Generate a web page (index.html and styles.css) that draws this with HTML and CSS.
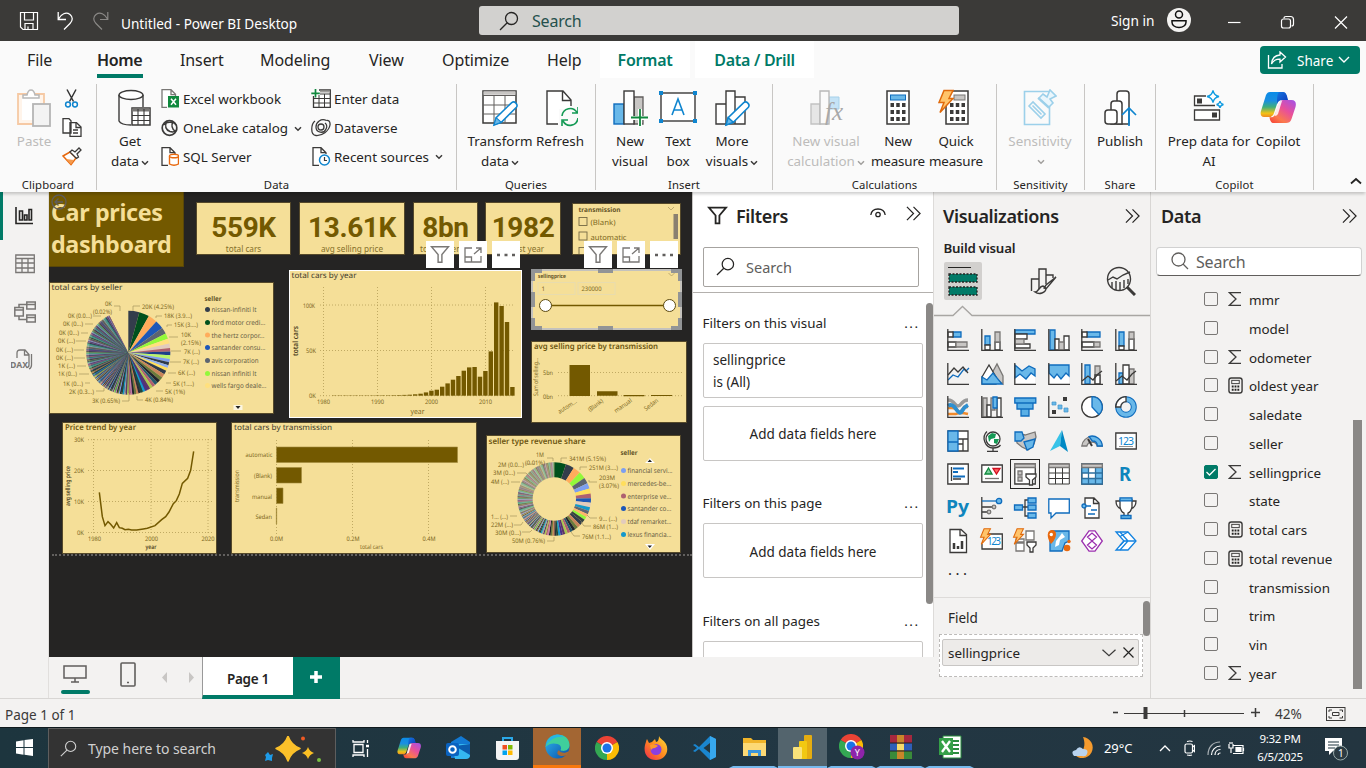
FILE: index.html
```html
<!DOCTYPE html>
<html lang="en">
<head>
<meta charset="utf-8">
<title>Untitled - Power BI Desktop</title>
<link rel="stylesheet" href="styles.css">
</head>
<body>
<svg class="defs" width="0" height="0">
  <defs>
    <linearGradient id="cpA" x1="0" y1="0" x2="0" y2="1"><stop offset="0" stop-color="#0a8be8"/><stop offset=".35" stop-color="#1a8fe0"/><stop offset=".6" stop-color="#3fae7c"/><stop offset=".85" stop-color="#f2c316"/><stop offset="1" stop-color="#f08a20"/></linearGradient>
    <linearGradient id="cpB" x1="1" y1="0" x2="0.2" y2="1"><stop offset="0" stop-color="#a052ea"/><stop offset=".45" stop-color="#e84f9b"/><stop offset=".8" stop-color="#fb7a4d"/><stop offset="1" stop-color="#f8503c"/></linearGradient>
    <linearGradient id="cpC" x1="0" y1="0" x2="1" y2="1"><stop offset="0" stop-color="#1476e0"/><stop offset="1" stop-color="#0e35b8"/></linearGradient>
    <linearGradient id="edg" x1="0" y1="0" x2="1" y2="1"><stop offset="0" stop-color="#2db6ee"/><stop offset="1" stop-color="#0b4fa8"/></linearGradient>
    <linearGradient id="ffx" x1="1" y1="0" x2="0" y2="1"><stop offset="0" stop-color="#ffe03a"/><stop offset=".5" stop-color="#ff8a1f"/><stop offset="1" stop-color="#f0264f"/></linearGradient>
  </defs>
  <symbol id="sigma" viewBox="0 0 14 16"><path d="M13 1.700H1.500L8 8l-6.500 6.300H13" fill="none" stroke="#3b3a39" stroke-width="1.300"/></symbol>
  <symbol id="calc" viewBox="0 0 16 18"><rect x="1" y="1" width="14" height="16" rx="2.500" fill="none" stroke="#3b3a39" stroke-width="1.500"/><rect x="4" y="3.500" width="8" height="3.500" fill="none" stroke="#3b3a39"/><path d="M4 10h2M7 10h2M10 10h2M4 13.500h2M7 13.500h2M10 13.500h2" stroke="#252423" stroke-width="2"/></symbol>
  <symbol id="dbl" viewBox="0 0 16 16"><path d="M1 1l7 7-7 7M8 1l7 7-7 7" fill="none" stroke="#252423" stroke-width="1.300"/></symbol>
  <symbol id="mag" viewBox="0 0 20 20"><circle cx="12.500" cy="7.500" r="6" fill="none" stroke="currentColor" stroke-width="1.300"/><path d="M8.200 11.800L1 19" stroke="currentColor" stroke-width="1.300"/></symbol>
  <symbol id="funnel" viewBox="0 0 20 20"><path d="M1 1.800h18L12 10v8.200H8V10z" fill="none" stroke="currentColor" stroke-width="1.500"/></symbol>
  <symbol id="chev" viewBox="0 0 8 6"><path d="M1 1.200l3 3 3-3" fill="none" stroke="currentColor" stroke-width="1.500"/></symbol>
  <symbol id="copilot" viewBox="0 0 36 33"><path d="M10 1h12c3 0 4 2 4.500 4l1 4h-6c-2 0-3.500 1-4.500 4l-3 9c-1 3-2.500 4-5 4H4c-3 0-4-3-3-6L6 4c1-2 2-3 4-3z" fill="url(#cpA)"/><path d="M19 1h4c3 0 4 3 5 8h-6c-3 0-4 2-5 4 0-5 0-10 2-12z" fill="url(#cpC)"/><path d="M26 32H14c-3 0-4-2-4.500-6 4 1 5-1 6-4l3-9c1-3 3-4 5-4h8c4 0 5 3 4 7l-4 12c-1 3-3 4-5.500 4z" fill="url(#cpB)"/><path d="M18.500 11q1.500-1.500 3.500-1l-4 13q-1 2-3.500 2z" fill="#fff" opacity=".85"/></symbol>
  <symbol id="chrome" viewBox="0 0 24 24"><path d="M12 12L1.600 6A12 12 0 0 1 22.400 6z" fill="#ea4335"/><path d="M12 12L22.400 6A12 12 0 0 1 12 24z" fill="#fbbc04"/><path d="M12 12v12A12 12 0 0 1 1.600 6z" fill="#34a853"/><circle cx="12" cy="12" r="6" fill="#fff"/><circle cx="12" cy="12" r="4.500" fill="#1a73e8"/></symbol>
  <symbol id="pencil" viewBox="0 0 26 26"><path d="M2 24l2-7L19 2.500q2-1.500 4 .5t.5 4L9 21.500z" fill="#fff" stroke="#0f85cf" stroke-width="1.500"/><path d="M2 24l2-7 5 4.500z" fill="#69b8e9" stroke="#0f85cf"/></symbol>
  <symbol id="bolt" viewBox="0 0 16 24"><path d="M6 1h9l-4 8h4L2 23l4-10H1z" fill="#ffc46b" stroke="#e06a0c" stroke-width="1.500"/></symbol>
</svg>

<div class="app">
  <header class="titlebar">
    <div class="quick">
      <svg width="20" height="20" viewBox="0 0 20 20" fill="none" stroke="#fff" stroke-width="1.200"><path d="M1.500 1.500h17v17H4l-2.500-2.500zM5.500 1.500V9h9V1.500M6 18.500v-6h8v6M9 18.500v-3"/></svg>
      <svg width="17" height="19" viewBox="0 0 17 19" fill="none" stroke="#fff" stroke-width="1.300"><path d="M1.200 1v7.500H9M1.500 8C4 3 9 .5 13 3.500c3 2.500 3 6 0 9L7 18.500"/></svg>
      <svg class="redo" width="17" height="19" viewBox="0 0 17 19" fill="none" stroke="#8a8886" stroke-width="1.200"><path d="M15.800 1v7.500H8M15.500 8C13 3 8 .5 4 3.500c-3 2.500-3 6 0 9l6 6"/></svg>
      <span class="apptitle">Untitled - Power BI Desktop</span>
    </div>
    <div class="topsearch"><svg width="20" height="20"><use href="#mag"/></svg><span>Search</span></div>
    <div class="account">
      <span>Sign in</span>
      <svg class="avatar" width="24" height="24" viewBox="0 0 24 24"><circle cx="12" cy="12" r="12" fill="#f3f2f1"/><circle cx="12" cy="6.500" r="3.500" fill="none" stroke="#111" stroke-width="1.500"/><path d="M5 12.700h14v1.500c0 3-3 5.300-7 5.300s-7-2.300-7-5.300z" fill="none" stroke="#111" stroke-width="1.500"/></svg>
      <svg class="win" width="125" height="14" viewBox="0 0 125 14" fill="none" stroke="#fff" stroke-width="1.200"><path d="M0 7.500h12.500"/><rect x="53.500" y="4" width="9" height="9" rx="2"/><path d="M56 3.500q0-2 2-2h4.500q3 0 3 3V9q0 2-2 2"/><path d="M107 1.500L119 13.500M119 1.500L107 13.500"/></svg>
    </div>
  </header>

  <nav class="tabs">
    <span class="tab file">File</span><span class="tab home">Home</span><span class="tab ins">Insert</span><span class="tab mod">Modeling</span><span class="tab view">View</span><span class="tab opt">Optimize</span><span class="tab help">Help</span><span class="tab ctx fmt">Format</span><span class="tab ctx drill">Data / Drill</span>
    <button class="share"><svg width="20" height="18" viewBox="0 0 20 18" fill="none" stroke="#fff" stroke-width="1.300"><path d="M1.500 4v13h13.500v-4"/><path d="M13 1l5.500 5-5.500 5V8.200C9 8 6.500 9.500 4.500 13 5 7.500 8 4.200 13 4z"/></svg><span>Share</span><svg width="12" height="8" viewBox="0 0 12 8" fill="none" stroke="#fff" stroke-width="1.400"><path d="M1 1l5 5 5-5"/></svg></button>
  </nav>

  <section class="ribbon">
    <div class="group g-clip">
      <div class="items">
        <div class="big paste off"><svg width="36" height="38" viewBox="0 0 36 38"><path d="M2 5h26v30H2z" fill="#fff4ea" stroke="#f6c9a4" stroke-width="1.800"/><path d="M6 9h18v22H6z" fill="#fff"/><path d="M7 9V6h4q1-5 4-5t4 5h4v3z" fill="#fff" stroke="#b8b8b8" stroke-width="1.500"/><rect x="17" y="15" width="17" height="22" fill="#f3f3f3" stroke="#b5b5b5" stroke-width="1.800"/></svg><span>Paste</span></div>
        <div class="minis">
          <svg width="19" height="19" viewBox="0 0 19 19" fill="none"><path d="M5 0.500l6.500 12M14 .5L7.500 12.500" stroke="#333" stroke-width="1.500"/><circle cx="6" cy="15.500" r="2.400" stroke="#0f85cf" stroke-width="1.500"/><circle cx="13" cy="15.500" r="2.400" stroke="#0f85cf" stroke-width="1.500"/></svg>
          <svg width="20" height="19" viewBox="0 0 20 19" fill="#fff" stroke="#3b3a39" stroke-width="1.300"><path d="M1 .7h6l2 2V15H1zM8 4.700h6.500L19 9v9.300H8z"/><path d="M14 5v4.500h5M11 12h5M11 15h5" fill="none"/></svg>
          <svg width="20" height="19" viewBox="0 0 20 19"><path d="M1 9l7-4 6 6-5 6.500z" fill="#fff" stroke="#e8690f" stroke-width="1.500"/><path d="M4 12l8 1-3 4.500z" fill="#f59a4d"/><path d="M8 5l2-2 3 2 4-4 2 2-4 4 1.500 3-2 1.500z" fill="#fff" stroke="#3b3a39" stroke-width="1.300"/></svg>
        </div>
      </div>
      <div class="glabel">Clipboard</div>
    </div>

    <div class="group g-data">
      <div class="items">
        <div class="big getdata"><svg width="36" height="38" viewBox="0 0 36 38"><path d="M4 6v26q2 4 12 4M28 6v12" fill="none" stroke="#3b3a39" stroke-width="1.400"/><ellipse cx="16" cy="6" rx="12" ry="4.500" fill="#fff" stroke="#3b3a39" stroke-width="1.400"/><rect x="17" y="19" width="18" height="17" fill="#fff" stroke="#3b3a39" stroke-width="1.500"/><path d="M17 21h18" stroke="#797775" stroke-width="3"/><path d="M17 26.500h18M17 31.500h18M23 20v16M29 20v16" stroke="#3b3a39" stroke-width="1.100"/></svg><span>Get</span><span>data <svg class="cv"><use href="#chev"/></svg></span></div>
        <div class="rows c1">
          <div><svg width="18" height="19" viewBox="0 0 18 19"><path d="M6 18.300H1V.7h9l4.500 4.500V7M10 .7v5h4.500" fill="#fff" stroke="#797775" stroke-width="1.300"/><rect x="7" y="7" width="11" height="11.500" fill="#10893e"/><path d="M10 9.700l5 6M15 9.700l-5 6" stroke="#fff" stroke-width="1.500"/></svg><span>Excel workbook</span></div>
          <div><svg width="18" height="18" viewBox="0 0 18 18" fill="none" stroke="#3b3a39" stroke-width="1.700"><circle cx="8.500" cy="9" r="7.300"/><path d="M6 2.500C3 7 5 11 9 12.500c3 1 6 0 7-2M3 6c1-3 10-4 12 0M12 3c-2 3-1 7 2 9" stroke-width="1.500"/></svg><span>OneLake catalog</span><svg class="cv far"><use href="#chev"/></svg></div>
          <div><svg width="18" height="19" viewBox="0 0 18 19"><path d="M7 18.300H1V.7h8l5 5V7M9 .7v5h5" fill="#fff" stroke="#3b3a39" stroke-width="1.300"/><path d="M8.500 9v8q4.500 2.500 9 0V9" fill="#fff" stroke="#e8690f" stroke-width="1.400"/><ellipse cx="13" cy="9" rx="4.500" ry="1.800" fill="#fff" stroke="#e8690f" stroke-width="1.400"/></svg><span>SQL Server</span></div>
        </div>
        <div class="rows c2">
          <div><svg width="20" height="19" viewBox="0 0 20 19"><path d="M2.500 7v11.300H19.300V1H8" fill="#fff" stroke="#3b3a39" stroke-width="1.300"/><path d="M9 2.500h10" stroke="#a19f9d" stroke-width="2"/><path d="M3 9.500h16M3 14h16M8 6v12M13.500 5v13M9 5h10" stroke="#3b3a39"/><path d="M4.500 0v8.500M.3 4.300h8.500" stroke="#10893e" stroke-width="1.700"/></svg><span>Enter data</span></div>
          <div><svg width="20" height="18" viewBox="0 0 20 18" fill="none" stroke="#3b3a39" stroke-width="1.300"><circle cx="10" cy="8" r="3"/><path d="M15.500 1.500C10-1 5 3 5 8c0 6 8 7 10 2 2-4-1-6-1-6M4 2C0 5-1 16 5 16.500 11 17 18 12 19 6c.5-4-2-5-3.500-4.500"/></svg><span>Dataverse</span></div>
          <div><svg width="18" height="19" viewBox="0 0 18 19"><path d="M7 18.300H1V.7h8l5 5V7M9 .7v5h5" fill="#fff" stroke="#3b3a39" stroke-width="1.300"/><circle cx="12.500" cy="13" r="5" fill="#fff" stroke="#0f85cf" stroke-width="1.500"/><path d="M12.500 10v3.500H15" fill="none" stroke="#3b3a39" stroke-width="1.200"/></svg><span>Recent sources</span><svg class="cv near"><use href="#chev"/></svg></div>
        </div>
      </div>
      <div class="glabel">Data</div>
    </div>

    <div class="group g-query">
      <div class="items">
        <div class="big w64"><svg width="38" height="38" viewBox="0 0 38 38"><rect x="2" y="2" width="33" height="32" fill="#fff" stroke="#3b3a39" stroke-width="1.500"/><path d="M2.500 4h32" stroke="#c8c6c4" stroke-width="3.500"/><path d="M2 6.500h33M2 16h33M2 25h33M13 6.500V34M24 6.500V34" stroke="#605e5c" stroke-width="1"/><use href="#pencil" x="11" y="11" width="27" height="27"/></svg><span>Transform</span><span>data <svg class="cv"><use href="#chev"/></svg></span></div>
        <div class="big w56"><svg width="36" height="38" viewBox="0 0 36 38"><path d="M5 2h16l8 9v9H17v15H5z" fill="#fff"/><path d="M16 35H5V2h16l8 9v6M20.500 2v9.500H29" fill="none" stroke="#3b3a39" stroke-width="1.400"/><path d="M20 27c1-8 11-10 15-3.500M36 29c-1 8-11 10-15 3M36 18v6h-6M20 37v-6h6" fill="none" stroke="#159a55" stroke-width="1.600"/></svg><span>Refresh</span></div>
      </div>
      <div class="glabel">Queries</div>
    </div>

    <div class="group g-ins">
      <div class="items">
        <div class="big w48"><svg width="36" height="38" viewBox="0 0 36 38"><rect x="2" y="15" width="10" height="20" fill="#69b8e9" stroke="#0f6cbd" stroke-width="1.400"/><path d="M22 8h9v27h-9z" fill="#c8c6c4" stroke="#605e5c" stroke-width="1.300"/><rect x="12" y="2" width="10" height="33" fill="#fff" stroke="#3b3a39" stroke-width="1.400"/><path d="M28 20v18M19 29h18" stroke="#fff" stroke-width="4"/><path d="M28 20v17M19 28.500h18" stroke="#10893e" stroke-width="1.800"/></svg><span>New</span><span>visual</span></div>
        <div class="big w48"><svg width="38" height="38" viewBox="0 0 38 38"><rect x="2" y="4" width="34" height="28" fill="#fff" stroke="#3b3a39" stroke-width="1.400"/><path d="M0 2h4v4H0zM34 2h4v4h-4zM0 30h4v4H0zM34 30h4v4h-4z" fill="#0f85cf"/><path d="M13 26l6-16 6 16M15 21h8" fill="none" stroke="#0f85cf" stroke-width="1.600"/></svg><span>Text</span><span>box</span></div>
        <div class="big w60"><svg width="38" height="38" viewBox="0 0 38 38" stroke="#3b3a39" stroke-width="1.400" fill="#fff"><path d="M3 15h10v20H3zM22 8h10v27H22zM13 2h9v33h-9z"/><use href="#pencil" x="11" y="11" width="27" height="27"/></svg><span>More</span><span>visuals <svg class="cv"><use href="#chev"/></svg></span></div>
      </div>
      <div class="glabel">Insert</div>
    </div>

    <div class="group g-calc">
      <div class="items">
        <div class="big w86 off"><svg width="36" height="38" viewBox="0 0 36 38"><path d="M3 15h9v20H3z" fill="#e6e6e6" stroke="#c2c2c2" stroke-width="1.400"/><path d="M21 8h10v12H21z" fill="#c5e3f6" stroke="#a5d1ea"/><path d="M12 2h9v33h-9z" fill="#fafafa" stroke="#b8b8b8" stroke-width="1.400"/><text x="17" y="31" font-family="Liberation Serif" font-style="italic" font-size="25" fill="#a8a8a8">fx</text></svg><span>New visual</span><span>calculation <svg class="cv"><use href="#chev"/></svg></span></div>
        <div class="big w58"><svg width="26" height="38" viewBox="0 0 26 38"><rect x="2" y="2" width="22" height="33" fill="#fff" stroke="#3b3a39" stroke-width="1.500"/><rect x="5.500" y="6" width="15" height="5" fill="#69b8e9" stroke="#0f6cbd"/><path d="M5.500 16h15M5.500 23h15M5.500 30h15" stroke="#3b3a39" stroke-width="4" stroke-dasharray="3.500 2.250"/></svg><span>New</span><span>measure</span></div>
        <div class="big w58"><svg width="36" height="38" viewBox="0 0 36 38"><rect x="8" y="2" width="22" height="33" fill="#fff" stroke="#3b3a39" stroke-width="1.500"/><rect x="16" y="6" width="11" height="5" fill="#c8c6c4" stroke="#797775"/><path d="M12 16h15M12 23h15M12 30h15" stroke="#3b3a39" stroke-width="4" stroke-dasharray="3.500 2.250"/><use href="#bolt" x="0" y="0" width="16" height="25"/></svg><span>Quick</span><span>measure</span></div>
      </div>
      <div class="glabel">Calculations</div>
    </div>

    <div class="group g-sens">
      <div class="items">
        <div class="big w86 off"><svg width="34" height="38" viewBox="0 0 34 38" fill="#fafafa" stroke="#9cd0ea" stroke-width="1.600"><path d="M1.500 2.500h25v33h-25z"/><path d="M6 17l4-4 12 12-4 4zM9.500 16.500l9 9"/><path d="M16 9l4-4 4 3 3-7 6 6-6 3 3 4-4 4z" fill="#eaf6fc"/><path d="M15 9l11 10" stroke-width="2"/></svg><span>Sensitivity</span><span class="onlycv"><svg class="cv"><use href="#chev"/></svg></span></div>
      </div>
      <div class="glabel">Sensitivity</div>
    </div>

    <div class="group g-share">
      <div class="items">
        <div class="big w60"><svg width="34" height="38" viewBox="0 0 34 38" fill="#fff" stroke="#3b3a39" stroke-width="1.500"><path d="M14 35V5q0-3 3-3h6q3 0 3 3v30z"/><path d="M8 35V15q0-3 3-3h5q3 0 3 3v20z"/><path d="M2 24q0-3 3-3h6q3 0 3 3v8q0 3-3 3H5q-3 0-3-3z"/><path d="M26 37V20M19 26l7-7 7 7" fill="none" stroke="#0f85cf" stroke-width="1.700"/></svg><span>Publish</span></div>
      </div>
      <div class="glabel">Share</div>
    </div>

    <div class="group g-cop">
      <div class="items">
        <div class="big w86"><svg width="32" height="38" viewBox="0 0 32 38" fill="#fff" stroke="#3b3a39" stroke-width="1.300"><path d="M13 7H1.500v9.500H22M1.500 21h25v10h-25z"/><path d="M4 9.500h5v5H4zM19 23.500h5v5h-5z" fill="#3b3a39" stroke="none"/><path d="M20 1.500q1 5 6 6-5 1-6 6-1-5-6-6 5-1 6-6zM27 12q.5 3 3.500 3.500-3 .5-3.500 3.500-.5-3-3.500-3.500 3-.5 3.500-3.500z" stroke="#0f9be0"/></svg><span>Prep data for</span><span>AI</span></div>
        <div class="big w48b"><svg width="36" height="38" viewBox="0 0 36 38"><use href="#copilot" x="0" y="2" width="36" height="33"/></svg><span>Copilot</span></div>
      </div>
      <div class="glabel">Copilot</div>
    </div>
    <svg class="collapse" width="12" height="8" viewBox="0 0 12 8" fill="none" stroke="#252423" stroke-width="1.800"><path d="M1 6.500L6 2l5 4.500"/></svg>
  </section>

  <main class="work">
    <aside class="rail">
      <div class="r on"><svg width="18" height="18" viewBox="0 0 18 18" fill="none" stroke="#252423" stroke-width="1.600"><path d="M1 0v16.500h17M4.500 4h3v9h-3zM9.500 8H12v5H9.500zM14 2.500h2.500V13H14z"/></svg></div>
      <div class="r"><svg width="20" height="20" viewBox="0 0 20 20" fill="none" stroke="#797775" stroke-width="1.300"><path d="M.8 1h18.500v17.500H.8zM.8 4.500h18.500M.8 9h18.500M.8 14h18.500M7 4.500v14M13 4.500v14"/></svg></div>
      <div class="r"><svg width="22" height="22" viewBox="0 0 22 22" fill="none" stroke="#797775" stroke-width="1.500"><path d="M.8 6.500h8.500V15H.8zM12.800 1h8.500v7h-8.500zM12.800 14h8.500v7h-8.500zM.8 9h8.500M12.800 3.500h8.500M12.800 16.500h8.500M5 6.500V3.500h8M5 15v3.500h8"/></svg></div>
      <div class="r"><svg class="dax" width="24" height="22" viewBox="0 0 24 22" fill="none" stroke="#797775" stroke-width="1.300"><path d="M6 9V4q0-3 3-3h5l4 4.500V16q0 2.500-2.500 2.500M13.500 1v5H18M20.500 5v11q0 3-2.500 4"/><text x="-1" y="19" font-size="9" font-weight="bold" stroke="none" fill="#797775" textLength="18" lengthAdjust="spacingAndGlyphs">DAX</text></svg></div>
    </aside>

    <div class="center">
      <div class="upper">
        <div class="canvas">
          <div class="banner"><h1>Car prices<br>dashboard</h1><svg class="back" width="16" height="16" viewBox="0 0 16 16" fill="none" stroke="#605e5c" stroke-width="1.300"><circle cx="8" cy="8" r="7"/><path d="M12 8H4.500M7.500 4.500L4 8l3.500 3.500"/></svg></div>

          <div class="card k1"><b>559K</b><i>total cars</i></div>
          <div class="card k2"><b>13.61K</b><i>avg selling price</i></div>
          <div class="card k3"><b>8bn</b><i>total revenue</i></div>
          <div class="card k4"><b>1982</b><i>oldest year</i></div>

          <svg class="tile t-trans" viewBox="572 203 109 52"><text class="ti" x="578.500" y="212" textLength="42">transmission</text><path d="M668 207l3 3 3-3" class="ax"/><g class="cb"><rect x="579" y="217.500" width="8" height="8"/><rect x="579" y="232" width="8" height="8"/><rect x="579" y="247.500" width="8" height="8"/></g><text x="590.500" y="225" class="l8" textLength="25">(Blank)</text><text x="590.500" y="239.500" class="l8" textLength="36">automatic</text><rect x="673.500" y="214" width="4.500" height="25" fill="#8a8070"/></svg>

          <svg class="tile t-slider" viewBox="531 269 151 61"><text class="ti" x="538" y="278" textLength="28">sellingprice</text><path d="M668.500 273l3 3 3-3" class="ax"/><g fill="none" stroke="#e8dcae"><rect x="538" y="282.500" width="37" height="12"/><rect x="578" y="282.500" width="37" height="12"/></g><text x="541.500" y="291">1</text><text x="581.500" y="291" textLength="20">230000</text><path d="M546 305.500h124" stroke="#735900" stroke-width="1.500"/><g fill="#fff" stroke="#5c4a10"><circle cx="545.500" cy="305.500" r="6"/><circle cx="669.500" cy="305.500" r="6"/></g><rect x="532" y="270" width="149" height="59" fill="none" stroke="#c4c2bd" stroke-width="2"/><path d="M533 281v-10h9M598 271h15M671 271h9v10M533 292v15M680 292v15M533 318v10h9M598 328h15M671 328h9v-10" fill="none" stroke="#929496" stroke-width="4"/></svg>

          <svg class="tile t-pie" viewBox="49 282 225 132"><text class="tt" x="51.500" y="290" textLength="71">total cars by seller</text><g id="pie"></g>
            <g class="sm">
              <text x="105" y="306" textLength="7">0K</text><text x="93" y="313.500" textLength="19">(0.02%)</text><text x="68" y="317.500" textLength="24">0K (0.0...)</text><text x="63" y="326" textLength="20">0K (0...)</text><text x="59" y="334.500" textLength="20">0K (0...)</text><text x="58" y="342.500" textLength="17">0K (...)</text><text x="56" y="351.500" textLength="17">0K (...)</text><text x="56" y="359.500" textLength="17">0K (...)</text><text x="58" y="368" textLength="17">1K (...)</text><text x="58" y="376" textLength="19">1K (0...)</text><text x="63" y="385.500" textLength="20">1K (0...)</text><text x="69" y="394" textLength="25">2K (0.3...)</text><text x="92" y="403" textLength="28">3K (0.65%)</text>
              <text x="142" y="309" textLength="32">20K (4.25%)</text><text x="164" y="318" textLength="28">18K (3.9...)</text><text x="174" y="327" textLength="24">15K (3....)</text><text x="181" y="337" textLength="10">10K</text><text x="181" y="345" textLength="20">(2.15%)</text><text x="184" y="353.500" textLength="16">7K (...)</text><text x="183" y="364" textLength="16">7K (...)</text><text x="178" y="375" textLength="17">6K (...)</text><text x="173" y="385.500" textLength="21">5K (1....)</text><text x="165" y="393.500" textLength="20">5K (1%)</text><text x="145" y="402" textLength="28">4K (0.84%)</text>
              <path class="ax" d="M114 306h6v5M140 306h-7v5M162 316h-6v2M172 325h-5v2M178 337h-9M181 351h-10M181 362h-11M176 373h-8M171 383h-5M163 391h-7M143 400h-6v-4M122 401h7v-6M96 391h8v-3M85 383h5M79 374h10M77 366h9M74 358h11M74 350h10M76 341h10M81 333h7M85 324h8M93 316h8"/>
            </g>
            <g class="leg"><text class="ti" x="204.500" y="301" textLength="17">seller</text>
              <circle cx="207.500" cy="309.500" r="2.500" fill="#333d4b"/><text x="211.500" y="312" textLength="45">nissan-infiniti lt</text>
              <circle cx="207.500" cy="322.500" r="2.500" fill="#00501d"/><text x="211.500" y="325" textLength="54">ford motor credi...</text>
              <circle cx="207.500" cy="335" r="2.500" fill="#ffac5c"/><text x="211.500" y="337.500" textLength="53">the hertz corpor...</text>
              <circle cx="207.500" cy="347.500" r="2.500" fill="#1d57b8"/><text x="211.500" y="350" textLength="54">santander consu...</text>
              <circle cx="207.500" cy="360.500" r="2.500" fill="#5c6471"/><text x="211.500" y="363" textLength="47">avis corporation</text>
              <circle cx="207.500" cy="373.500" r="2.500" fill="#93f83a"/><text x="211.500" y="376" textLength="45">nissan infiniti lt</text>
              <circle cx="207.500" cy="385.500" r="2.500" fill="#ffe07e"/><text x="211.500" y="388" textLength="55">wells fargo deale...</text></g>
            <path d="M233.500 405h9v5h-9z" fill="#fff" opacity=".7"/><path d="M235.500 406h5l-2.500 3z" fill="#222"/></svg>

          <svg class="tile t-cols" viewBox="289 270 233 148"><text class="tt" x="291.500" y="277.500" textLength="65">total cars by year</text>
            <path class="grid" d="M320 305h195M320 350.500h195M320 395.700h195M323.500 287v109M377.500 287v109M431.500 287v109M485.500 287v109"/><g id="cols" fill="#735900"></g>
            <text x="303" y="307.500" textLength="12">100K</text><text x="306" y="352.500" textLength="10">50K</text><text x="309" y="398" textLength="7">0K</text><text x="317" y="404" textLength="13">1980</text><text x="371" y="404" textLength="13">1990</text><text x="425" y="404" textLength="13">2000</text><text x="479" y="404" textLength="13">2010</text><text class="l8" x="410.500" y="413.500" textLength="14">year</text><text class="l8 dk" transform="translate(298 356) rotate(-90)" textLength="30">total cars</text></svg>

          <svg class="tile t-avg" viewBox="531 341 156 82"><text class="tb" x="534" y="349" textLength="124">avg selling price by transmission</text><path class="grid" d="M558 372.500h125M558 395.700h125"/><path fill="#735900" d="M569.500 365h20.500v31h-20.500zM597 391.300h20.500v4.500H597zM623.500 395h21v1.200h-21zM651 395h21v1h-21z"/><text x="543" y="374.500" textLength="10">5bn</text><text x="543" y="398.500" textLength="10">0bn</text><text transform="translate(538 396) rotate(-90)" textLength="38">Sum of selling...</text><text transform="translate(559.500 414) rotate(-33)" textLength="21">autom...</text><text transform="translate(590 412) rotate(-37)" textLength="17">(Blank)</text><text transform="translate(616 413) rotate(-35)" textLength="20">manual</text><text transform="translate(646 411) rotate(-37)" textLength="16">Sedan</text></svg>

          <svg class="tile t-line" viewBox="62 422 155 132"><text class="tb" x="65" y="430" textLength="71">Price trend by year</text><path class="grid" d="M88 439.700h124M88 470.500h124M88 501.500h124M88 532.500h124M93.500 439v96M151 439v96M208 439v96"/><g transform="translate(40 415) scale(.33333)"><polyline points="178,232 187,305 195,332 204,320 212,328 221,339 230,323 238,338 247,340 255,344 265,343 275,345 290,345 310,342 322,340 345,332 365,314 377,305 387,291 400,266 409,257 418,237 427,205 443,190 452,166 461,109" fill="none" stroke="#735900" stroke-width="4.500"/></g><text x="74" y="442" textLength="10">30K</text><text x="74" y="473" textLength="10">20K</text><text x="74" y="504" textLength="10">10K</text><text x="77" y="535" textLength="7">0K</text><text x="88" y="541" textLength="13">1980</text><text x="145" y="541" textLength="13">2000</text><text x="201.500" y="541" textLength="13">2020</text><text class="dk" x="145.500" y="549" textLength="11">year</text><text class="dk" transform="translate(69.500 506) rotate(-90)" textLength="40">avg selling price</text></svg>

          <svg class="tile t-bar" viewBox="231 422 246 132"><text class="tt" x="234" y="430" textLength="98">total cars by transmission</text><path class="grid" d="M276.500 440v94M352.500 440v94M428.500 440v94"/><path fill="#735900" stroke="#a28c3c" stroke-width=".6" d="M276.500 447h181v15.500h-181zM276.500 467.500h25v15.500h-25zM276.500 488h6.500v15.500h-6.500zM276.300 508h.4v16h-.4z"/><text x="245.500" y="457" textLength="27">automatic</text><text x="254" y="478" textLength="18">(Blank)</text><text x="252" y="498.500" textLength="20">manual</text><text x="255.500" y="519" textLength="16.500">Sedan</text><text x="270" y="541" textLength="13">0.0M</text><text x="346.500" y="541" textLength="13">0.2M</text><text x="422.500" y="541" textLength="13">0.4M</text><text x="360" y="549" textLength="23">total cars</text><text transform="translate(238.500 502) rotate(-90)" textLength="32">transmission</text></svg>

          <svg class="tile t-donut" viewBox="486 435 195 118"><text class="tb" x="488.500" y="443.500" textLength="97">seller type revenue share</text><g id="donut"></g>
            <g class="sm"><text x="536" y="457" textLength="8">1M</text><text x="525" y="464.500" textLength="20">(0.01%)</text><text x="498" y="467" textLength="26">2M (0.0...)</text><text x="493" y="475" textLength="22">3M (0...)</text><text x="491" y="484" textLength="18">4M (...)</text><text x="491" y="518.500" textLength="17">1... (...)</text><text x="491" y="526.500" textLength="22">22M (...)</text><text x="495" y="535" textLength="26">30M (0...)</text><text x="512" y="543" textLength="33">50M (0.76%)</text><text x="569" y="461" textLength="37">341M (5.15%)</text><text x="589" y="470" textLength="29">251M (3....)</text><text x="599" y="480" textLength="16">203M</text><text x="599" y="488" textLength="20">(3.07%)</text><text x="599" y="520.500" textLength="18">9... (...)</text><text x="593" y="529" textLength="25">86M (1...)</text><text x="582" y="538.500" textLength="29">76M (1.1...)</text>
            <path class="ax" d="M547 458h6v3M567 458h-6v4M587 467h-7v3M597 482h-8v-2M597 518h-7l-3-3M591 526h-7l-3-4M580 536h-6l-3-4M547 541h7v-4M522 532h8l2-2M514 525h7l2-3M510 516h7M511 482h9M517 473h9l3 3M526 464h9"/></g>
            <g class="leg"><text class="ti" x="620.500" y="455" textLength="17">seller</text><path d="M645 463h10l-5-5zM645 544h10l-5 6z" fill="#fff"/><path d="M647.500 462h4.500l-2.200-2.500zM647.500 545.500h4.500l-2.200 2.500z" fill="#222"/>
            <circle cx="623.500" cy="470.500" r="2.500" fill="#7d9ff0"/><text x="627.500" y="473" textLength="45">financial servi...</text><circle cx="623.500" cy="483.500" r="2.500" fill="#ffde5c"/><text x="627.500" y="486" textLength="44">mercedes-be...</text><circle cx="623.500" cy="496" r="2.500" fill="#ae6070"/><text x="627.500" y="498.500" textLength="44">enterprise ve...</text><circle cx="623.500" cy="508.500" r="2.500" fill="#1d57b8"/><text x="627.500" y="511" textLength="44">santander co...</text><circle cx="623.500" cy="521.500" r="2.500" fill="#e2cbbd"/><text x="627.500" y="524" textLength="44">tdaf remarket...</text><circle cx="623.500" cy="534.500" r="2.500" fill="#1498cb"/><text x="627.500" y="537" textLength="44">lexus financia...</text></g></svg>

          <div class="vtools v1"><span><svg width="20" height="19"><use href="#funnel"/></svg></span><span><svg width="18" height="16" viewBox="0 0 18 16" fill="none" stroke="#797775" stroke-width="1.300"><path d="M8 1H1v14h16V9M1 10h6.500v5M10 7l7-6M12 1h5v5"/></svg></span><span><svg width="18" height="4"><path d="M0 2h3M7.500 2h3M15 2h3" stroke="#605e5c" stroke-width="2.500"/></svg></span></div>
          <div class="vtools v2"><span><svg width="20" height="19"><use href="#funnel"/></svg></span><span><svg width="18" height="16" viewBox="0 0 18 16" fill="none" stroke="#797775" stroke-width="1.300"><path d="M8 1H1v14h16V9M1 10h6.500v5M10 7l7-6M12 1h5v5"/></svg></span><span><svg width="18" height="4"><path d="M0 2h3M7.500 2h3M15 2h3" stroke="#605e5c" stroke-width="2.500"/></svg></span></div>
          <div class="pageend"></div>
        </div>

        <div class="filters">
          <div class="fhead"><svg width="21" height="19" viewBox="0 0 20 20" class="ff"><path d="M1 1.800h18L12 10v8.200H8V10z" fill="none" stroke="#252423" stroke-width="1.900"/></svg><h2>Filters</h2><svg class="eye" width="16" height="10" viewBox="0 0 16 10" fill="none" stroke="#252423" stroke-width="1.300"><path d="M.8 7C2-1 14-1 15.200 7"/><circle cx="8" cy="6.500" r="2.200"/></svg><svg width="15" height="15"><use href="#dbl"/></svg></div>
          <div class="fsearch"><svg width="20" height="20"><use href="#mag"/></svg><span>Search</span></div>
          <div class="fbody">
            <div class="fsec"><span>Filters on this visual</span><em>...</em></div>
            <div class="fcard two"><span>sellingprice</span><span>is (All)</span></div>
            <div class="fcard add">Add data fields here</div>
            <div class="fsec s2"><span>Filters on this page</span><em>...</em></div>
            <div class="fcard add b">Add data fields here</div>
            <div class="fsec s3"><span>Filters on all pages</span><em>...</em></div>
            <div class="fcard add"></div>
            <div class="fscroll"></div>
          </div>
        </div>
      </div>
      <div class="pagebar">
        <span class="desk"><svg width="24" height="18" viewBox="0 0 24 18" fill="none" stroke="#605e5c" stroke-width="1.500"><path d="M1 1h22v12H1zM12 13v4M8 17h8"/></svg></span>
        <svg width="16" height="25" viewBox="0 0 16 25" fill="none" stroke="#605e5c" stroke-width="1.600"><rect x="1" y="1" width="14" height="23" rx="1"/><path d="M7 20.500h2"/></svg>
        <svg class="arr" width="34" height="11"><path d="M6 0v11L1 5.500zM28 0v11l5-5.500z" fill="#c8c6c4"/></svg>
        <span class="ptab">Page 1</span><span class="padd"><svg width="14" height="14"><path d="M7 1v12M1 7h12" stroke="#fff" stroke-width="3.500"/></svg></span>
      </div>
    </div>

    <section class="viz">
      <div class="vhead"><h2>Visualizations</h2><svg width="15" height="16"><use href="#dbl"/></svg></div>
      <div class="build">Build visual</div>
      <div class="modes">
        <span class="mode on"><svg width="30" height="30" viewBox="0 0 30 30"><path d="M0 1.500h23" stroke="#252423"/><g fill="#007a67" stroke="#252423" stroke-width="1.300" stroke-dasharray="2 1.500"><path d="M1 8h28v8H1zM1 21h28v8H1z"/></g></svg></span>
        <span class="mode"><svg width="27" height="28" viewBox="0 0 27 28" fill="#f3f2f1" stroke="#3b3a39" stroke-width="1.400"><path d="M1.500 24V12h8M9 24V2h7v15M16 8h7v3"/><path d="M26 10L16 18l-2 3 2 1 10-12zM13 19c-4 0-4 6-8 6 4 3 11 1 11-4z"/></svg></span>
        <span class="mode"><svg width="30" height="30" viewBox="0 0 30 30" fill="none" stroke="#3b3a39" stroke-width="1.400"><circle cx="13" cy="13" r="11.500"/><path d="M2 14l5-3 4 2 6-4 7-3M6 22v-6M10 24V15M14 24V16M18 22v-8M22 18v-5"/><path d="M21 21l8 8" stroke-width="3"/></svg></span>
      </div>
      <svg class="notch" width="216" height="13" viewBox="0 0 216 13"><path d="M0 11.500h19l9.500-9 9.500 9h178" fill="none" stroke="#a8a6a3" stroke-width="1.300"/></svg>
      <div class="vgrid">
        <svg viewBox="0 0 22 22"><path class="b" d="M6 3h8v5H6z"/><path class="w" d="M1 3h5v5H1zM1 13h8v5H1z"/><path class="g" d="M9 13h11v5H9z"/><path d="M.8 0v21.300H22"/></svg>
        <svg viewBox="0 0 22 22"><path class="b" d="M4 7h5v9H4z"/><path class="w" d="M4 16h5v5H4zM14 13h5v8h-5z"/><path class="g" d="M14 3h5v10h-5z"/><path d="M.8 0v21.300H22"/></svg>
        <svg viewBox="0 0 22 22"><path class="b" d="M1 1h20v4H1z"/><path class="w" d="M1 5h12v5H1zM1 15h15v4H1z"/><path class="g" d="M1 10h9v5H1z"/><path d="M.8 0v21.300H22"/></svg>
        <svg viewBox="0 0 22 22"><path class="b" d="M2 1h5v20H2z"/><path class="w" d="M7 10h4v11H7zM16 7h5v14h-5z"/><path class="g" d="M11 13h5v8h-5z"/><path d="M.8 0v21.300H22"/></svg>
        <svg viewBox="0 0 22 22"><path class="b" d="M6 3h13v5H6z"/><path class="w" d="M1 3h5v5H1zM1 13h12v5H1z"/><path class="g" d="M13 13h6v5h-6z"/><path d="M.8 0v21.300H22"/></svg>
        <svg viewBox="0 0 22 22"><path class="b" d="M4 3h5v14H4z"/><path class="w" d="M4 17h5v4H4zM14 10h5v11h-5z"/><path class="g" d="M14 3h5v7h-5z"/><path d="M.8 0v21.300H22"/></svg>

        <svg viewBox="0 0 22 22"><path class="bl" d="M1 16l5-5 5 2 6-8 2 2 3-3" transform="translate(0 1)"/><path d="M1 12l6-7 4 4 5-5 5 6"/><path d="M.8 0v21.300H22"/></svg>
        <svg viewBox="0 0 22 22"><path class="g" d="M10 12l6-11 6 12v8z"/><path class="w" d="M1 14L8 2l7 12v7H1z"/><path class="b" d="M1 14l5 3 6-7 9 11H1z"/></svg>
        <svg viewBox="0 0 22 22"><path class="w" d="M1 14l5-3 6 6 5-6 4 2v8H1z" style="stroke:none"/><path class="b" d="M1 2l7 6 7-5 6 3v7l-4-3-5 6-6-5-5 4z"/><path d="M.8 0v21.300H22"/></svg>
        <svg viewBox="0 0 22 22"><path class="w" d="M1 10h20v11H1z" style="stroke:none"/><path class="b" d="M1 2h20v11l-3-3-5 6-4-5-3 4-5-5z"/><path d="M.8 0v21.300H22"/></svg>
        <svg viewBox="0 0 22 22"><path class="b" d="M4 2h5v19H4z"/><path class="g" d="M14 3h5v18h-5z"/><path class="w" d="M14 12h5v9h-5z"/><path d="M1 18l6-5 5 4 5-6 4-3"/><path d="M.8 0v21.300H22"/></svg>
        <svg viewBox="0 0 22 22"><path class="b" d="M4 10h4v11H4z"/><path class="g" d="M14 6h5v15h-5z"/><path class="w" d="M8 2h6v19H8z"/><path d="M1 18l6-5 5 4 5-6 4-3"/><path d="M.8 0v21.300H22"/></svg>

        <svg viewBox="0 0 22 22"><path class="or" d="M1 12h4q4 0 6 3t6-4h4M1 18h8q4-2 12 0"/><path class="gr" d="M1 4q4 0 7 4t6 0 7-4"/><path class="bw" d="M1 10q4-3 8 3t6 2 6-6"/><path d="M.8 0v21.300H22"/></svg>
        <svg viewBox="0 0 22 22"><path class="g" d="M2 2h4v19H2z"/><path class="w" d="M6 9h4v12H6zM16 2h4v19h-4z"/><path class="g" d="M10 2h4v12h-4z"/><path class="b" d="M12 1h4v11h-4z"/><path d="M.8 0v21.300H22"/></svg>
        <svg viewBox="0 0 22 22"><path class="bd" d="M.8 2h21v5h-21zM3 7h16v6H3zM7 13h8v7H7z"/></svg>
        <svg viewBox="0 0 22 22"><path d="M15 1h4v4h-4zM4 14h4v4H4z" fill="#3b3a39" stroke="none"/><path d="M4 6h4v3H4zM10 9h4v4h-4zM16 12h4v4h-4z" fill="#69b8e9" stroke="#3f93c9" stroke-width=".7"/><path d="M.8 0v21.300H22"/></svg>
        <svg viewBox="0 0 22 22"><circle class="w" cx="11" cy="11" r="10.300"/><path class="b" d="M11 .7A10.300 10.300 0 0 1 18 18.500L11 11z"/></svg>
        <svg viewBox="0 0 22 22"><circle cx="11" cy="11" r="7.800" stroke="#0f6cbd" style="stroke-width:6"/><circle cx="11" cy="11" r="7.800" stroke="#69b8e9" style="stroke-width:4"/><path class="w" d="M11 .7A10.300 10.300 0 0 0 .7 11h5A5.300 5.300 0 0 1 11 5.700z"/></svg>

        <svg viewBox="0 0 22 22"><path class="w" d="M1 1h20v20H1zM11 9h10M16 9v12M11 14h5"/><path class="b" d="M1 1h10v20H1zM1 12h10"/></svg>
        <svg viewBox="0 0 22 22"><circle class="w" cx="12" cy="9" r="7"/><path d="M7 6l4-3 4 1-1 4-4 1-2 3zM13 9l5 0-2 5-3-1z" fill="#159a55" stroke="none"/><path d="M6 1.500C0 7 4 18 12 18c4 0 6-1 7.500-3M12 18v3.500M6 21.300h11"/></svg>
        <svg viewBox="0 0 22 22"><path class="g" d="M2 3l9 2 10-3 1 5-2 7-6 6-6-3-5-4z"/><path class="b" d="M1 2h7l2 6-3 3H1zM10 12l11-3-2 8-6 3z"/></svg>
        <svg viewBox="0 0 22 22"><path d="M14 0L2 21l10-5z" fill="#37c3e8" stroke="none"/><path d="M14 0l6 22-8-6z" fill="#0089c4" stroke="none"/></svg>
        <svg viewBox="0 0 22 22"><path class="g" d="M.8 16a10.300 10.300 0 0 1 20.500 0h-5a5.500 5.500 0 0 0-10.500 0z"/><path class="b" d="M8 6.500a10.300 10.300 0 0 1 13.300 9.500h-5c0-3-2-5-5-5z"/><path d="M11 16L7 9" stroke-width="2"/></svg>
        <svg viewBox="0 0 22 22"><path class="w" d="M.8 3h20.500v16H.8z"/><text x="3" y="14.500" textLength="16" font-size="10.500" fill="#0f85cf" stroke="none">123</text><path d="M4 16.500h14" stroke="#797775" stroke-width=".8"/></svg>

        <svg viewBox="0 0 22 22"><path class="w" d="M.8 1h20.500v20H.8z"/><path class="bl" d="M6 5.500h11M6 9h5M6 13.500h12" stroke-width="2"/><path d="M4.500 4v14M6 16h8"/></svg>
        <svg viewBox="0 0 22 22"><path class="w" d="M.8 2h20.500v17H.8z"/><path d="M4 11l3.500-6L11 11z" fill="#7bd09b" stroke="#10893e"/><path d="M12 5.500h7L15.500 11z" fill="#f66" stroke="#d01020"/><path d="M4 15.500h14" stroke="#797775"/></svg>
        <svg class="sel" viewBox="0 0 22 22"><path class="w" d="M.8 1h20.500v20H.8z"/><path class="g" d="M.8 1h20.500v3.500H.8zM4 8h4v4H4zM4 14h4v4H4z"/><path d="M12 11h10v3l-3.500 3v5h-3v-5L12 14z" fill="#fff"/></svg>
        <svg viewBox="0 0 22 22"><path class="w" d="M.8 1h20.500v20H.8zM1 10h20M1 15.500h20M7.500 4v17M14.500 4v17" stroke-width="1"/><path class="g" d="M.8 1h20.500v3.500H.8z"/></svg>
        <svg viewBox="0 0 22 22"><path class="w" d="M.8 1h20.500v20H.8z"/><path d="M1 16h20v5H1zM14 5h7v16h-7zM1 5h6v5H1z" fill="#69b8e9" stroke="none"/><path d="M.8 1h20.500v20H.8zM1 10h20M1 15.500h20M7.500 4v17M14.500 4v17" stroke="#2d6f9e"/><path class="g" d="M.8 1h20.500v3.500H.8z"/></svg>
        <svg viewBox="0 0 22 22"><text x="4" y="17.500" font-size="19" font-weight="bold" textLength="12" lengthAdjust="spacingAndGlyphs" fill="#0f85bd" stroke="none">R</text></svg>

        <svg viewBox="0 0 22 22"><text x="-1" y="16" font-size="18" font-weight="bold" textLength="23" lengthAdjust="spacingAndGlyphs" fill="#0f85bd" stroke="none">Py</text></svg>
        <svg viewBox="0 0 22 22"><path d="M.8 0v21.300H22M1 10h10M1 15h5" /><path class="bl" d="M1 4h15"/><circle class="b" cx="18" cy="4" r="2.700"/><circle class="g" cx="13" cy="10" r="1.800"/><circle class="g" cx="8" cy="15" r="1.800"/></svg>
        <svg viewBox="0 0 22 22"><path d="M9 10h6M11 10V3h4M11 10v9h4"/><path class="b" d="M.5 8h8v5h-8zM14 1h8v5h-8zM14 8h8v5h-8zM14 16h8v5h-8z"/></svg>
        <svg viewBox="0 0 22 22"><path class="w" d="M.8 2h20.500v14H8l-5 5v-5H.8z" style="stroke:#0f6cbd"/></svg>
        <svg viewBox="0 0 22 22"><path class="w" d="M4 1h9l5 5v15H4zM12.500 1v5.500H18"/><path class="bl" d="M5 9h5M10 13h6M7 17h7"/><circle class="b" cx="3" cy="9" r="2"/></svg>
        <svg viewBox="0 0 22 22"><path class="w" d="M5 3h12v7q-1 5-4 6v3H9v-3q-3-1-4-6zM5 4H1q0 6 5 8M17 4h4q0 6-5 8"/><path class="b" d="M5 .8h12v3H5zM6 18.500h10v3H6z"/></svg>

        <svg viewBox="0 0 22 22"><path class="w" d="M3 -.5h11l5.500 5v18H3zM13 -.5v6h6"/><path d="M7 19v-6M11 19v-3M15 19v-8" style="stroke-width:2.500"/></svg>
        <svg viewBox="0 0 22 22"><path class="w" d="M3 4h18.300v15H1V14"/><text x="6" y="15" textLength="14" font-size="10" fill="#0f85cf" stroke="none">123</text><use href="#bolt" x="-2" y="-2" width="13" height="17"/></svg>
        <svg viewBox="0 0 22 22"><path class="w" d="M12 1h8v9h-8zM2 13h8v8H2zM2 9h8v3H2z" style="stroke:#797775"/><path d="M13 12h9v3l-3 3v4h-3v-4l-3-3z" fill="#fff"/><use href="#bolt" x="-2" y="-2" width="13" height="17"/></svg>
        <svg viewBox="0 0 22 22"><path class="b" d="M4 1h17v10l-4 2-3 8H2V10z"/><path class="w" d="M14 3l3 4-5 3-1 5-4 2 1-6 4-5z" style="stroke:none"/><path d="M3 14C-2 7-1 0 4 0s6 7-1 14z" fill="#e8690f" stroke="none"/><circle cx="3.300" cy="4.500" r="1.700" fill="#fff" stroke="none"/><circle cx="19" cy="18" r="3.300" fill="#e8690f" stroke="none"/><circle cx="21" cy="11.500" r="1.700" fill="#e8690f" stroke="none"/></svg>
        <svg viewBox="0 0 22 22"><path class="w" d="M8 .8h6l7.300 10.200-7.300 10.200H8L.7 11zM6.500 7L11 3l4.500 4L11 11zM6.500 15L11 11l4.500 4L11 19z" style="stroke:#9b2fae;stroke-width:1.300"/></svg>
        <svg viewBox="0 0 22 22"><path class="w" d="M1 2h12l8 9-8 9H1l8-9z" style="stroke:#1383e0"/><path d="M5 6.500L13 2M5 2l8 9h8M5 15.500L9 11h4l-8 9" style="stroke:#1383e0"/></svg>
      </div>
      <div class="more">...</div>
      <div class="fieldbox"><div class="flabel">Field</div>
        <div class="well"><div class="pill"><span>sellingprice</span><svg width="14" height="8" viewBox="0 0 14 8"><path d="M.5 .8l6.500 6 6.500-6" fill="none" stroke="#3b3a39" stroke-width="1.200"/></svg><svg width="11" height="11"><path d="M.5.5l10 10M10.500.5l-10 10" stroke="#252423" stroke-width="1.200"/></svg></div></div><div class="vscroll"></div>
      </div>
    </section>

    <section class="data">
      <div class="vhead"><h2>Data</h2><svg width="15" height="16"><use href="#dbl"/></svg></div>
      <div class="dsearch"><svg width="18" height="18" viewBox="0 0 18 18" fill="none" stroke="#605e5c" stroke-width="1.300"><circle cx="7.500" cy="7.500" r="6.500"/><path d="M12 12l5 5"/></svg><span>Search</span></div>
      <div class="dlist">
        <ul>
          <li><i class="ck"></i><svg class="sg"><use href="#sigma"/></svg><span>mmr</span></li>
          <li><i class="ck"></i><b></b><span>model</span></li>
          <li><i class="ck"></i><svg class="sg"><use href="#sigma"/></svg><span>odometer</span></li>
          <li><i class="ck"></i><svg class="sc"><use href="#calc"/></svg><span>oldest year</span></li>
          <li><i class="ck"></i><b></b><span>saledate</span></li>
          <li><i class="ck"></i><b></b><span>seller</span></li>
          <li><i class="ck on"><svg width="12" height="12"><path d="M1.500 6l3 3L10.500 3" fill="none" stroke="#fff" stroke-width="1.300"/></svg></i><svg class="sg"><use href="#sigma"/></svg><span>sellingprice</span></li>
          <li><i class="ck"></i><b></b><span>state</span></li>
          <li><i class="ck"></i><svg class="sc"><use href="#calc"/></svg><span>total cars</span></li>
          <li><i class="ck"></i><svg class="sc"><use href="#calc"/></svg><span>total revenue</span></li>
          <li><i class="ck"></i><b></b><span>transmission</span></li>
          <li><i class="ck"></i><b></b><span>trim</span></li>
          <li><i class="ck"></i><b></b><span>vin</span></li>
          <li><i class="ck"></i><svg class="sg"><use href="#sigma"/></svg><span>year</span></li>
        </ul>
        <div class="dscroll"></div>
      </div>
    </section>
  </main>

  <footer class="status"><span class="pg">Page 1 of 1</span>
    <svg width="147" height="16" viewBox="0 0 147 16" fill="none" stroke="#3b3a39"><path d="M0 7.500h5" stroke-width="1.600"/><path d="M11 8.500h120"/><path d="M32.500 2v12" stroke-width="4"/><path d="M71.500 5v7" stroke-width="1.500"/><path d="M138 7.500h9M142.500 3v9" stroke-width="1.500"/></svg>
    <span class="pct">42%</span>
    <svg width="20" height="14" viewBox="0 0 20 14" fill="none" stroke="#3b3a39"><rect x=".5" y=".5" width="18.500" height="13"/><path d="M3 5V3h3M13.500 3h3v2M3 9v2h3M13.500 11h3V9M6.500 5.500h6.500v3H6.500z"/></svg>
  </footer>

  <div class="taskbar">
    <div class="start"><svg width="17" height="17" fill="#fff"><path d="M0 2.500L7.500 1.300V8H0zM8.500 1.100L17 0v8H8.500zM0 9h7.500v6.700L0 14.500zM8.500 9H17v8l-8.500-1.200z"/></svg></div>
    <div class="tsearch"><svg width="17" height="17"><use href="#mag"/></svg><span>Type here to search</span><svg class="stars" width="62" height="26" viewBox="0 0 62 26"><path d="M24 0q3 9 12 12.500Q27 16 24 25q-3-9-12-12.500Q21 9 24 0z" fill="#fbc02a" stroke="#fbc02a" stroke-width="1.500" stroke-linejoin="round"/><path d="M44 11q1.500 4.500 6 6-4.500 1.500-6 6-1.500-4.500-6-6 4.500-1.500 6-6z" fill="#fbbf24"/><path d="M4 16l2 3 3-1-1 4 0 3-4-1-3 1 1-4-1-2z" fill="#1e9be8"/><circle cx="39" cy="2.500" r="2" fill="#f05a24"/><circle cx="55" cy="24" r="2" fill="#7ac143"/></svg></div>
    <div class="apps">
      <span><svg width="17" height="17" viewBox="0 0 17 17" fill="none" stroke="#fff" stroke-width="1.300"><path d="M2 4.500h9v8H2zM1 0v2h11V0M1 17v-2h11v2M15.500 0v3M15.500 9v8"/><path d="M14 6h3" stroke-width="2.500"/></svg></span>
      <span><svg width="24" height="22"><use href="#copilot" width="24" height="22"/></svg></span>
      <span><svg width="25" height="24" viewBox="0 0 25 24"><path d="M5 6l10-6 9 6v13q0 3-3 3H5z" fill="#1279d3"/><path d="M6 8h18v11q0 4-4 4H9z" fill="#35b8f1"/><path d="M9 10l15 9V8z" fill="#0b5cad"/><rect y="7" width="13" height="13" rx="2" fill="#0a63c0"/><circle cx="6.500" cy="13.500" r="3.300" fill="none" stroke="#fff" stroke-width="2"/></svg></span>
      <span><svg width="23" height="24" viewBox="0 0 23 24"><path d="M7 6V2h9v4" fill="none" stroke="#2aa8e8" stroke-width="2"/><path d="M0 5h23v16q0 3-3 3H3q-3 0-3-3z" fill="#f4f4f4"/><path d="M6.500 9h4.500v4.500H6.500z" fill="#f25022"/><path d="M12 9h4.500v4.500H12z" fill="#7fba00"/><path d="M6.500 14.500h4.500V19H6.500z" fill="#00a4ef"/><path d="M12 14.500h4.500V19H12z" fill="#ffb900"/></svg></span>
      <span class="edge"><svg width="25" height="25" viewBox="0 0 25 25"><circle cx="12.500" cy="12.500" r="12" fill="url(#edg)"/><path d="M2 8C6-2 24-2 24.500 11c0 6-7 7-9 5 1-1 1-5-3-6C9 9 4 9 .5 13z" fill="#3fcf9c"/><path d="M2 8C6 0 15-1 19 3c-6-1-14 1-18.500 10z" fill="#27b5e5"/><path d="M24 17c-4 3-9 2-10-1-5 4 2 8 8 5z" fill="#a56a36"/></svg></span>
      <span><svg width="24" height="24"><use href="#chrome"/></svg></span>
      <span><svg width="24" height="24" viewBox="0 0 24 24"><path d="M15 0c1 3 5 4 7 8 4 8-2 16-10 16S-1 18 1 9c1-3 1-4 2-6l2 4 3-1 3-3 1 3c2 0 3-3 3-6z" fill="url(#ffx)"/><circle cx="12" cy="13.500" r="5.500" fill="#8a3fe0"/><path d="M6 9q5-2 8 1l-3 2q-4 0-4 3z" fill="#ff9a2b"/></svg></span>
      <span><svg width="24" height="24" viewBox="0 0 24 24"><path d="M17 0l6 3v18l-6 3L6 13l-4 3-2-1 4-3-4-3 2-1 4 3z" fill="#1a86d0"/><path d="M17 7v10l-6.500-5z" fill="#223842"/><path d="M17 0l6 3v18l-6 3z" fill="#37a8ee"/></svg></span>
      <span class="u"><svg width="23" height="20" viewBox="0 0 23 20"><path d="M0 1h8l2 2h13v16H0z" fill="#f0b429"/><path d="M0 6h23v13H0z" fill="#fcd975"/><path d="M5 19v-6h13v6h-3v-3H8v3z" fill="#3a96dd"/></svg></span>
      <span class="u act"><svg width="20" height="24" viewBox="0 0 20 24"><rect x="11" width="8" height="24" rx="1" fill="#e6ad10"/><rect x="6" y="6" width="8" height="18" rx="1" fill="#f2c811"/><rect x="0" y="12" width="9" height="12" rx="1" fill="#f9e27a"/></svg></span>
      <span class="u"><svg width="26" height="26" viewBox="0 0 26 26"><use href="#chrome" width="24" height="24"/><circle cx="18.500" cy="18.500" r="7" fill="#8e24aa"/><text x="15.700" y="22" font-size="9" fill="#fff">Y</text></svg></span>
      <span class="u"><svg width="24" height="24" viewBox="0 0 24 24"><path d="M1 0h22v8H1z" fill="#a5283e"/><path d="M1 8h22v8H1z" fill="#2f5fb8"/><path d="M1 16h22v8H1z" fill="#3a8a3a"/><path d="M8 0h7v24H8z" fill="#c8862a"/><path d="M8 9h7v6H8z" fill="#f5dc6c"/><path d="M1 8h22M1 16h22" stroke="#222"/></svg></span>
      <span class="u"><svg width="24" height="24" viewBox="0 0 24 24"><path d="M5 1h18v22H5z" fill="#fff" stroke="#2b8c3e"/><path d="M14 6h7M14 10h7M14 14h7M14 18h7" stroke="#2b8c3e" stroke-width="2"/><path d="M1 3h14v17H1z" fill="#35a048"/><path d="M4 6l8 11M12 6L4 17" stroke="#fff" stroke-width="2.300"/></svg></span>
    </div>
    <div class="tray">
      <svg width="26" height="24" viewBox="0 0 26 24"><path d="M12 1a10.500 10.500 0 1 1-9 17c8 1 13-7 9-17z" fill="#f59b2e"/><path d="M3 20q-4-5 2-6 3-5 7-1 6 0 4 5-1 3-5 2z" fill="#b9d3ee"/></svg>
      <span class="temp">29°C</span>
      <svg class="up" width="12" height="8" viewBox="0 0 12 8" fill="none" stroke="#fff" stroke-width="1.300"><path d="M1 7l5-5 5 5"/></svg>
      <svg class="cam" width="11" height="16" viewBox="0 0 11 16" fill="none" stroke="#fff" stroke-width="1.200"><path d="M3 1.500q3-1 5.500 0"/><rect x="1" y="4" width="7.500" height="9" rx="1.500"/><path d="M8.500 7l2-1.500v6l-2-1.500M3 15q3 .8 5 0"/></svg>
      <svg class="wifi" width="14" height="15" viewBox="0 0 14 15" fill="none" stroke="#fff" stroke-width="1.200"><path d="M1 14C1 6 6 1 13 1" opacity=".6"/><path d="M4.500 14c0-5 4-9 9-9M8 14c0-3 2-5.500 5.500-5.500M11 14q0-2 2.500-2"/></svg>
      <svg class="bat" width="17" height="13" viewBox="0 0 17 13" fill="none" stroke="#fff" stroke-width="1.200"><path d="M5 3.500h10v8H5M15.500 6v3"/><path d="M8 5.500h5v4H8z" fill="#fff"/><path d="M1 2v4h4V2M2 0v2M4 0v2M3 6v5"/></svg>
      <span class="clock">9:32 PM<br>6/5/2025</span>
      <svg class="note" width="24" height="24" viewBox="0 0 24 24"><path d="M1 1h17v13H9l-4 4v-4H1z" fill="#fff"/><path d="M4 5h11M4 8h11M4 11h7" stroke="#1d333d"/><circle cx="16.500" cy="16" r="7" fill="#2b3b43" stroke="#9aa"/><text x="14" y="20" font-size="10" fill="#fff">1</text></svg>
    </div>
  </div>
</div>
<script src="charts.js"></script>
</body>
</html>
```

FILE: styles.css
```css
* { box-sizing: border-box; }
body { margin: 0; font-family: "Noto Sans", "Open Sans", sans-serif; font-size: 13px; color: #252423; overflow: hidden; }
svg { display: block; flex: none; }
h1, h2, ul { margin: 0; padding: 0; }
.defs { position: absolute; }
.app { width: 1366px; height: 768px; display: flex; flex-direction: column; background: #f3f2f1; }

.titlebar { height: 41px; background: #3b3a38; color: #fff; display: flex; }
.quick { width: 479px; display: flex; padding: 11px 0 0 19px; align-items: flex-start; }
.quick svg + svg { margin-left: 18px; }
.quick .redo { margin-left: 18px; }
.apptitle { font-size: 13.6px; margin: 3px 0 0 12px; white-space: nowrap; }
.topsearch { width: 480px; height: 29px; margin-top: 6px; border-radius: 3px; background: #d2d1cf; color: #252423; display: flex; align-items: center; padding-left: 20px; font-size: 16px; }
.topsearch span { margin-left: 13px; color: #24504c; letter-spacing: -.2px; }
.account { display: flex; padding-left: 152px; }
.account span { margin-top: 11px; width: 56px; font-size: 13.7px; white-space: nowrap; }
.avatar { margin-top: 8px; }
.win { margin: 15px 0 0 37px; }

.tabs { height: 38px; background: #fafafa; display: flex; font-size: 16px; line-height: 39px; }
.tab { height: 37px; white-space: nowrap; letter-spacing: -.1px; }
.file { width: 70px; padding-left: 27px; }
.home { width: 46px; margin-left: 27px; font-weight: 600; border-bottom: 4px solid #007a67; letter-spacing: -.4px; }
.ins { margin-left: 37px; width: 43px; }
.mod { margin-left: 37px; width: 71px; }
.view { margin-left: 38px; width: 36px; }
.opt { margin-left: 37px; width: 68px; letter-spacing: -.1px; }
.help { margin-left: 37px; width: 35px; }
.ctx { background: #fff; color: #007a67; font-weight: 600; text-align: center; letter-spacing: -.3px; }
.fmt { margin-left: 18px; width: 90px; }
.drill { margin-left: 5px; width: 119px; }
.share { margin: 5px 0 0 446px; width: 100px; height: 28px; border: 0; border-radius: 4px; background: #007a67; color: #fff; font: 13.5px "Noto Sans", sans-serif; display: flex; align-items: center; padding: 0 0 0 7px; }
.share span { margin: 1px 5px 0 10px; }

.ribbon { height: 113px; background: #fafafa; display: flex; position: relative; padding-top: 5px; box-shadow: 0 3px 3px -1px rgba(0,0,0,.2); z-index: 2; }
.group { height: 106px; border-right: 1px solid #c8c6c4; display: flex; flex-direction: column; }
.items { display: flex; height: 92px; padding-top: 5px; }
.glabel { text-align: center; font-size: 11.3px; line-height: 17px; height: 14px; white-space: nowrap; letter-spacing: .1px; }
.big { display: flex; flex-direction: column; align-items: center; font-size: 13.4px; line-height: 20px; white-space: nowrap; }
.big > svg { margin-bottom: 4px; }
.big > span { display: flex; align-items: center; }
.off { color: #bdbcbb; }
.cv { width: 8px; height: 6px; color: #3b3a39; margin: 3px 0 0 2px; }
.off .cv { color: #a19f9d; }
.onlycv { height: 18px; }
.g-clip { width: 97px; }
.paste { width: 36px; margin-left: 16px; }
.minis { margin-left: 10px; display: flex; flex-direction: column; gap: 10px; }
.g-data { width: 360px; }
.getdata { width: 46px; margin-left: 10px; margin-right: 8px; }
.getdata > svg { transform: translateX(3px); }
.rows { font-size: 13.4px; margin-top: -5px; }
.rows > div { height: 29px; display: flex; align-items: center; white-space: nowrap; }
.rows span { margin-left: 4px; }
.c1 { width: 150px; }
.far { margin-left: 6px; }
.near { margin-left: 6px; margin-top: 0; }
.c2 svg:first-child { width: 20px; }
.c2 span { margin-left: 3px; }
.g-query { width: 139px; }
.g-query .items { padding-left: 11px; }
.w64 { width: 64px; } .w56 { width: 56px; }
.g-ins { width: 177px; }
.g-ins .items { padding-left: 10px; }
.w48 { width: 48px; } .w60 { width: 60px; }
.g-calc { width: 224px; }
.g-calc .items { padding-left: 10px; }
.w86 { width: 86px; } .w58 { width: 58px; letter-spacing: -.15px; }
.g-sens { width: 88px; } .g-share { width: 71px; }
.g-share .items { padding-left: 5px; }
.g-cop { width: 158px; }
.g-cop .items { padding-left: 10px; }
.w48b { width: 52px; }
.collapse { position: absolute; right: 4px; bottom: 7px; }

.work { height: 507px; display: flex; border-bottom: 1px solid #d8d6d4; }
.rail { width: 49px; border-right: 1px solid #e1dfdd; }
.r { height: 48px; display: flex; align-items: center; justify-content: center; }
.r.on { border-left: 3px solid #007a67; padding-right: 3px; }
.rail .r + .r { padding-left: 1px; }
.dax { margin-left: -4px; }
.center { width: 885px; }
.upper { height: 465px; display: flex; }
.canvas { width: 643px; background: #252423; position: relative; overflow: hidden; }
.banner { position: absolute; left: 0; top: 0; width: 135px; height: 75px; background: #735900; border: 1px solid #594708; border-width: 0 1px 1px 0; }
.banner h1 { color: #f5df98; font-size: 23.3px; line-height: 31.5px; padding: 5px 0 0 2px; letter-spacing: -.35px; white-space: nowrap; }
.back { position: absolute; left: 2px; top: 2px; }
.card { position: absolute; top: 10px; height: 53px; background: #f5df98; border: 1px solid #55492a; text-align: center; overflow: hidden; white-space: nowrap; color: #735900; }
.card b { display: block; font: bold 28px/28px "Roboto", sans-serif; margin-top: 11px; letter-spacing: -.4px; }
.card i { display: block; font: 8.2px/11px "Noto Sans", sans-serif; margin-top: 1px; color: #85702a; }
.k1 { left: 147px; width: 95px; } .k2 { left: 250px; width: 106px; } .k3 { left: 364px; width: 65px; } .k4 { left: 436px; width: 76px; }
.tile { position: absolute; background: #f5df98; outline: 1px solid #55492a; outline-offset: -1px; text-rendering: geometricPrecision; }
.tile text { font-family: "Noto Sans", sans-serif; font-size: 6.2px; fill: #7d6822; }
.tile .tt { font-size: 7.8px; fill: #403a2c; }
.tile .tb { font-size: 8px; font-weight: 600; fill: #6b5510; }
.tile .ti { font-size: 6.6px; font-weight: 700; fill: #665628; }
.t-slider .ti { font-size: 5.6px; }
.tile .l8 { font-size: 7.4px; }
.tile .leg text:not(.ti) { font-size: 6.8px; fill: #686045; }
.tile .dk { fill: #4f441f; font-weight: 600; }
.ax { fill: none; stroke: #a8955c; stroke-width: .7; }
.cb { fill: none; stroke: #746944; stroke-width: .9; }
.grid { fill: none; stroke: #b29c55; stroke-width: .8; stroke-dasharray: 1 2; }
.t-trans { left: 523px; top: 11px; width: 109px; height: 52px; }
.t-slider { left: 481.500px; top: 77px; width: 151px; height: 61px; outline: 0; }
.t-pie { left: 0; top: 90px; width: 225px; height: 132px; }
.t-cols { left: 240px; top: 78px; width: 233px; height: 148px; outline: 1px solid #fff; outline-offset: -1px; }
.t-avg { left: 482px; top: 149px; width: 156px; height: 82px; }
.t-line { left: 13px; top: 230px; width: 155px; height: 132px; }
.t-bar { left: 182px; top: 230px; width: 246px; height: 132px; }
.t-donut { left: 437px; top: 243px; width: 195px; height: 118px; }
.vtools { position: absolute; top: 49px; display: flex; gap: 5px; color: #797775; }
.vtools span { width: 28px; height: 27px; background: #fff; display: flex; align-items: center; justify-content: center; }
.v1 { left: 377px; } .v2 { left: 535px; }
.pageend { position: absolute; left: 3px; right: 0; top: 362px; border-top: 2px dotted #62605e; }

.filters { width: 242px; background: #fff; border-right: 1px solid #dddbd9; border-left: 1px solid #c8c6c4; }
.fhead { display: flex; height: 55px; padding: 14px 0 0 14px; }
h2 { font-size: 18px; line-height: 20px; font-weight: 600; letter-spacing: -.35px; white-space: nowrap; }
.fhead h2 { width: 133px; margin-left: 8px; }
.eye { margin: 2px 20px 0 1px; }
.fsearch { height: 40px; width: 216px; margin-left: 10px; border: 1px solid #a6a3a0; border-radius: 2px; display: flex; align-items: center; padding-left: 12px; font-size: 14.5px; color: #605e5c; }
.fsearch svg { width: 19px; height: 19px; color: #252423; margin-top: -1px; }
.fsearch span { margin-left: 11px; margin-top: -1px; }
.fbody { margin-top: 5px; height: 365px; border-top: 1px solid #b3b0ad; padding: 20px 10px 0 9.5px; position: relative; overflow: hidden; }
.fsec { display: flex; justify-content: space-between; height: 30px; line-height: 20px; font-size: 13.4px; width: 217px; }
.fsec em { font-style: normal; letter-spacing: 1.5px; }
.fcard { width: 220px; height: 55px; border: 1px solid #c8c6c4; border-radius: 2px; margin-bottom: 8px; font-size: 13.5px; }
.two { display: flex; flex-direction: column; padding: 5px 9.5px; line-height: 22px; }
.add { text-align: center; line-height: 54px; padding-left: 1px; }
.s2 { margin-top: 32px; }
.add.b { margin-bottom: 0; line-height: 56px; }
.s3 { margin-top: 33px; }
.fscroll { position: absolute; right: 0; top: 10px; width: 7px; height: 301px; border-radius: 4px; background: #8a8886; }

.pagebar { height: 41px; display: flex; align-items: flex-start; }
.pagebar > svg { margin-top: 5px; }
.desk { width: 29px; height: 37px; margin: 0 30px 0 12px; padding: 8px 0 0 2px; position: relative; }
.desk::after { content: ""; position: absolute; left: 0; bottom: 0; width: 29px; height: 4px; border-radius: 2px; background: #007a67; }
.pagebar .arr { margin: 15px 7px 0 25px; width: 34px; }
.ptab { width: 91px; height: 42px; background: #fff; border-left: 1px solid #999; border-bottom: 4px solid #007a67; text-align: center; font-weight: 600; font-size: 13.5px; line-height: 44px; letter-spacing: -.3px; }
.padd { width: 47px; height: 42px; background: #007a67; display: flex; align-items: center; justify-content: center; padding: 0 1px 2px 0; }

.viz { width: 217px; border-right: 1px solid #d8d6d4; display: flex; flex-direction: column; }
.vhead { display: flex; justify-content: space-between; padding: 14px 10px 0 9px; height: 46px; }
.vhead svg { margin-top: 2px; }
.data .vhead { padding-right: 9px; padding-left: 10px; }
.build { font-weight: 600; font-size: 13.3px; letter-spacing: -.2px; line-height: 20px; padding-left: 9.5px; }
.modes { display: flex; padding: 4px 10px 0; gap: 43px; height: 42px; }
.mode { width: 38px; height: 38px; display: flex; align-items: center; justify-content: center; border-radius: 2px; }
.mode:nth-child(2) { margin-left: -1px; }
.mode.on { background: #d2d0ce; }
.mode:nth-child(3) { margin-left: -3px; }
.notch { margin-top: 4px; }
.vgrid { display: grid; grid-template-columns: repeat(6, 22px); grid-auto-rows: 22px; gap: 11.5px; padding: 12px 0 0 13px; height: 235px; }
.vgrid svg { width: 22px; height: 22px; fill: none; stroke: #3b3a39; stroke-width: 1.3; overflow: visible; }
.vgrid .b { fill: #69b8e9; stroke: #0f6cbd; } .vgrid .bd { fill: #5ab0e6; stroke: #0f6cbd; }
.vgrid .g { fill: #c8c6c4; stroke: #797775; } .vgrid .w { fill: #fff; }
.vgrid .bl { stroke: #0f6cbd; } .vgrid .or { stroke: #f08a2c; stroke-width: 2.5; } .vgrid .gr { stroke: #999; stroke-width: 3.5; } .vgrid .bw { stroke: #2e8fd0; stroke-width: 4; }
.vgrid .sel { outline: 1px solid #252423; outline-offset: 3px; }
.more { padding: 7px 0 0 14px; font-size: 15px; line-height: 20px; height: 46px; letter-spacing: 3.5px; }
.fieldbox { flex: 1; border-top: 1px solid #dddbd9; position: relative; margin-top: -1px; }
.flabel { padding: 10px 0 0 14px; line-height: 20px; font-size: 13.5px; }
.well { margin: 6px 0 0 5px; width: 204px; height: 43px; border: 1px dashed #bdbbb9; background: #fff; padding: 4px 3px; }
.pill { height: 27px; width: 197px; margin-left: -1px; border: 1px solid #c8c6c4; border-radius: 2px; background: #edebe9; display: flex; align-items: center; padding: 0 4px 0 5px; font-size: 13.4px; }
.pill span { flex: 1; }
.pill svg:last-child { margin-left: 7px; }
.vscroll { position: absolute; right: 0; top: 3px; width: 7px; height: 35px; border-radius: 4px; background: #8a8886; }

.data { flex: 1; }
.dsearch { margin: 9px 4px 0 5px; height: 29px; border: 1px solid #d1d1d1; border-bottom: 1px solid #605e5c; border-radius: 4px; background: #fff; display: flex; align-items: center; padding-left: 14px; font-size: 16px; color: #605e5c; }
.dsearch span { margin-left: 7px; letter-spacing: -.2px; }
.dsearch svg { margin-top: -2px; }
.dlist { display: flex; position: relative; padding-top: 9.7px; }
.dlist ul { list-style: none; width: 200px; }
.dlist li { height: 28.77px; display: flex; align-items: center; padding-left: 53px; font-size: 13.4px; }
.dlist li b { width: 45px; margin-left: -14px; }
.ck { width: 14px; height: 14px; border: 1px solid #797775; border-radius: 2px; margin-top: -2px; }
.ck.on { background: #007a67; border-color: #007a67; }
.sg { width: 14px; height: 16px; margin: -2px 7px 0 10px; }
.sc { width: 15px; height: 17px; margin: -1px 6px 0 10px; }
.dlist li > span { white-space: nowrap; }
.dscroll { position: absolute; right: 4px; top: 144px; width: 9px; height: 269px; background: #8a8886; }

.status { height: 28px; display: flex; align-items: center; font-size: 13px; color: #3b3a39; }
.pg { width: 1108px; padding: 3px 0 0 5px; font-size: 13.5px; }
.status > svg { margin-left: 5px; }
.pct { width: 46px; margin-left: 15px; font-size: 13.6px; }
.status > svg:last-child { margin-top: 2px; }

.taskbar { height: 41px; background: linear-gradient(90deg, #1d353e, #223743 60%, #233540); border-top: 1px solid #101a1e; display: flex; color: #fff; }
.start { width: 48px; padding: 11px 0 0 16px; }
.tsearch { width: 288px; background: #333; border: 1px solid #5e5e5e; border-bottom: 0; display: flex; align-items: center; padding-left: 11px; font-size: 14px; color: #d0d0d0; white-space: nowrap; }
.tsearch span { margin-left: 11px; width: 176px; letter-spacing: -.05px; }
.apps { display: flex; margin-left: -1px; }
.apps span { width: 49px; display: flex; align-items: center; justify-content: center; padding-left: 1px; }
.apps .edge { background: #a36633; border-bottom: 3px solid #f7780e; margin-left: 2px; width: 48px; padding-left: 0; }
.apps .edge + span { margin-left: 1px; }
.apps .u { border-bottom: 2px solid #76b9ed; border-left: 4px solid transparent; border-right: 4px solid transparent; background-clip: padding-box; }
.apps .u.act { background: #53646d; border-left: 0; border-right: 0; }
.tray { display: flex; align-items: center; margin-left: 97px; font-size: 13px; }
.temp { width: 46px; margin-left: 7px; letter-spacing: -.1px; }
.up { margin-left: 9px; } .cam { margin-left: 13px; } .wifi { margin-left: 12px; } .bat { margin-left: 7px; }
.clock { width: 70px; text-align: center; font-size: 11.5px; line-height: 18px; letter-spacing: -.3px; }
.note { margin-left: 9px; margin-top: 2px; }
```

FILE: charts.js
```javascript
const NS = 'http://www.w3.org/2000/svg';

function ring(id, cx, cy, outer, inner, head, colors, end) {
  const host = document.getElementById(id);
  const tail = ['#2f3b4c', '#1498cb', '#5c3566', '#3fae5c', '#ae6070', '#20242c', '#7d9ff0', '#c8845a', '#1e4a3a', '#98a0a8', '#4b2f8a', '#a8c850', '#c47aa8', '#23586e', '#6a7a3c', '#2c2c38'];
  const fine = ['#4a5a62', '#7b5a8c', '#4faa82', '#9a5f7c', '#2f3943', '#8f9fc8', '#2c7680', '#7f8a4c', '#5a3a7e', '#4ca896'];
  const slices = head.map((size, i) => [size, colors[i]]);
  let used = head.reduce((a, b) => a + b, 0);
  let width = 5.5, n = 0;
  while (used < end) {
    const set = used > 245 ? fine : tail;
    slices.push([width, set[(n * 7 + (n >> 2)) % set.length]]);
    used += width;
    width = Math.max(1.1, width * .95);
    n++;
  }
  let angle = 0;
  const pt = (r, a) => {
    const t = (a - 90) * Math.PI / 180;
    return (cx + r * Math.cos(t)).toFixed(2) + ' ' + (cy + r * Math.sin(t)).toFixed(2);
  };
  if (!inner) {
    const base = document.createElementNS(NS, 'path');
    base.setAttribute('d', `M${cx} ${cy}L${pt(outer - .5, 150)}A${outer - .5} ${outer - .5} 0 0 1 ${pt(outer - .5, end)}Z`);
    base.setAttribute('fill', '#46505a');
    host.appendChild(base);
  }
  slices.forEach(([size, color]) => {
    const next = Math.min(angle + size, end);
    const p = document.createElementNS(NS, 'path');
    const back = inner ? `L${pt(inner, next)}A${inner} ${inner} 0 0 0 ${pt(inner, angle)}Z` : `L${cx} ${cy}Z`;
    p.setAttribute('d', `M${pt(outer, angle)}A${outer} ${outer} 0 0 1 ${pt(outer, next)}${back}`);
    p.setAttribute('fill', color);
    if (angle > 285 && inner) p.setAttribute('opacity', .7);
    host.appendChild(p);
    angle = next;
  });
}

ring('pie', 128.3, 352.7, 42, 0,
  [15.3, 14, 12.5, 12, 9, 7.7, 7, 6, 5, 5, 5, 4.5, 4.5, 4, 4],
  ['#333d4b', '#00501d', '#ffac5c', '#1d57b8', '#5c6471', '#93f83a', '#ffe07e', '#e2cbbd', '#ae6070', '#1d3f8a', '#b8f56a', '#7d9ff0', '#2f3b4c', '#8fb0f0', '#ffde5c'], 333);

ring('donut', 554.3, 499, 36.7, 21.7,
  [18.5, 13.5, 12, 11, 9.5, 9, 8, 7.5, 7, 7, 6, 5.5, 5, 5, 5],
  ['#00501d', '#333d4b', '#ffac5c', '#93f83a', '#5c6471', '#7d9ff0', '#ffde5c', '#ae6070', '#1d57b8', '#e2cbbd', '#1498cb', '#606672', '#ffb56b', '#93f83a', '#35433f'], 359.5);

const columnHeights = { 1982: .3, 1983: .3, 1984: .3, 1985: .3, 1986: .3, 1987: .3, 1988: .3, 1989: .3, 1990: .4, 1991: .4, 1992: .4, 1993: .5, 1994: .6, 1995: .8, 1996: 1, 1997: 1.4, 1998: 2, 1999: 3.3, 2000: 5, 2001: 6, 2002: 9, 2003: 12.3, 2004: 16, 2005: 19.7, 2006: 25, 2007: 28.3, 2008: 28.7, 2009: 19, 2010: 24.7, 2011: 44.3, 2012: 93.3, 2013: 89.7, 2014: 73.7, 2015: 8.7 };
const cols = document.getElementById('cols');
Object.entries(columnHeights).forEach(([year, h]) => {
  const r = document.createElementNS(NS, 'rect');
  r.setAttribute('x', (323.4 + (year - 1980) * 5.4 - 2.2).toFixed(2));
  r.setAttribute('y', 395.7 - h);
  r.setAttribute('width', 4.4);
  r.setAttribute('height', h);
  cols.appendChild(r);
});

document.querySelectorAll('.tile text[textLength]').forEach(t => t.setAttribute('lengthAdjust', 'spacingAndGlyphs'));
```
